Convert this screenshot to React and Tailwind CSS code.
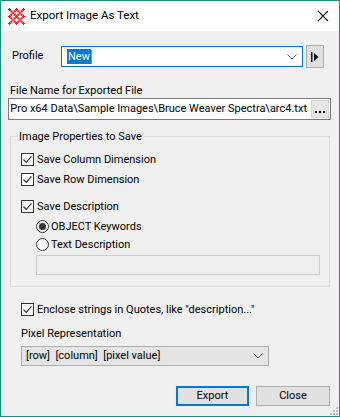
import React from "react";

function Check({ label }) {
  return (
    <div className="flex items-center h-[20px]">
      <div className="w-[13px] h-[13px] border border-[#333333] bg-white flex items-center justify-center">
        <svg width="11" height="11" viewBox="0 0 11 11">
          <path d="M1.5 5.5 L4.2 8.3 L9.5 2.3" fill="none" stroke="#333" strokeWidth="1.2" />
        </svg>
      </div>
      <span className="ml-[3px] text-[11px] text-black leading-none">{label}</span>
    </div>
  );
}

function Radio({ label, on }) {
  return (
    <div className="flex items-center h-[18px]">
      <div className="w-[13px] h-[13px] rounded-full border border-[#333333] bg-white flex items-center justify-center">
        {on && <div className="w-[7px] h-[7px] rounded-full bg-[#333333]" />}
      </div>
      <span className="ml-[2px] text-[11px] text-black leading-none">{label}</span>
    </div>
  );
}

function Chevron() {
  return (
    <svg width="10" height="6" viewBox="0 0 10 6">
      <path d="M0.5 0.5 L5 5 L9.5 0.5" fill="none" stroke="#555" strokeWidth="1" />
    </svg>
  );
}

function AppIcon() {
  const pts = [];
  for (let r = 0; r < 5; r++) {
    for (let c = 0; c < 5; c++) {
      if ((r + c) % 2 === 0) pts.push([c * 3.5 + 1.5, r * 3.5 + 1.5]);
    }
  }
  const pts2 = [];
  for (let r = 0; r < 4; r++) {
    for (let c = 0; c < 4; c++) {
      pts2.push([c * 3.5 + 3.25, r * 3.5 + 3.25]);
    }
  }
  return (
    <svg width="17" height="17" viewBox="0 0 17 17">
      {pts.map(([x, y], i) => (
        <g key={i} fill="#ff1010">
          <rect x={x - 1.5} y={y - 0.5} width="3" height="1" />
          <rect x={x - 0.5} y={y - 1.5} width="1" height="3" />
        </g>
      ))}
      {pts2.map(([x, y], i) => (
        <rect key={"b" + i} x={x - 1} y={y - 1} width="2" height="2" fill="#ff1010" />
      ))}
    </svg>
  );
}

export default function App() {
  return (
    <div className="w-[340px] h-[417px] border border-[#1f8a80] bg-[#f0f0f0] flex flex-col relative overflow-hidden font-['Roboto',sans-serif]">
      {/* title bar */}
      <div className="h-[30px] bg-white flex items-center shrink-0">
        <div className="ml-[7px] mt-[1px] flex"><AppIcon /></div>
        <span className="ml-[5px] text-[11.5px] text-black">Export Image As Text</span>
        <div className="ml-auto mr-[10px] flex">
          <svg width="12" height="12" viewBox="0 0 12 12">
            <path d="M1 1 L11 11 M11 1 L1 11" stroke="#111" strokeWidth="1.1" />
          </svg>
        </div>
      </div>

      {/* Profile row */}
      <div className="flex items-center mt-[14px] h-[23px]">
        <span className="ml-[11px] w-[49px] text-[11px] text-black">Profile</span>
        <div className="w-[242px] h-[21px] border border-[#0078d7] bg-white flex items-center">
          <span className="ml-[5px] bg-[#0078d7] text-white text-[11px] leading-[15px] px-[1px]">New</span>
          <span className="w-[1px] h-[14px] bg-[#f07000]" />
          <div className="ml-auto mr-[5px] flex items-center"><Chevron /></div>
        </div>
        <div className="ml-[3px] w-[18px] h-[23px] border border-[#adadad] bg-[#e1e1e1] flex items-center justify-center">
          <svg width="8" height="10" viewBox="0 0 8 10">
            <rect x="0" y="0" width="1.5" height="10" fill="#111" />
            <path d="M3 1 L7.5 5 L3 9 Z" fill="#111" />
          </svg>
        </div>
      </div>

      {/* File name */}
      <div className="ml-[9px] mt-[15px] text-[11px] text-black leading-[15px]">File Name for Exported File</div>
      <div className="ml-[7px] w-[323px] h-[22px] border border-[#7a7a7a] bg-white flex items-center">
        <div className="flex-1 overflow-hidden flex justify-end whitespace-nowrap">
          <span className="text-[11px] text-black pr-[4px]">C:\Users\Public\Documents\Mira Pro x64 Data\Sample Images\Bruce Weaver Spectra\arc4.txt</span>
        </div>
        <div className="mr-[1px] w-[18px] h-[18px] border border-[#d6d6d6] bg-[#e8e8e8] flex items-end justify-center gap-[2px] pb-[4px]">
          <div className="w-[2px] h-[2px] bg-black" />
          <div className="w-[2px] h-[2px] bg-black" />
          <div className="w-[2px] h-[2px] bg-black" />
        </div>
      </div>

      {/* Group box */}
      <div className="ml-[9px] mt-[16px] w-[320px] h-[151px] border border-[#dcdcdc] relative">
        <span className="absolute left-[6px] top-[-8px] px-[2px] bg-[#f0f0f0] text-[11px] text-black leading-[15px]">Image Properties to Save</span>
        <div className="ml-[10px] mt-[12px]">
          <Check label="Save Column Dimension" />
          <Check label="Save Row Dimension" />
          <div className="mt-[7px]"><Check label="Save Description" /></div>
          <div className="ml-[15px] mt-[1px]">
            <Radio label="OBJECT Keywords" on />
            <Radio label="Text Description" />
            <div className="mt-[2px] w-[284px] h-[20px] border border-[#cccccc] bg-[#f0f0f0]" />
          </div>
        </div>
      </div>

      <div className="ml-[20px] mt-[12px]"><Check label={'Enclose strings in Quotes, like "description..."'} /></div>

      <div className="ml-[20px] mt-[7px] text-[11px] text-black leading-[15px]">Pixel Representation</div>
      <div className="ml-[20px] mt-[5px] w-[248px] h-[20px] border border-[#adadad] bg-[#e5e5e5] flex items-center">
        <span className="ml-[4px] text-[11px] text-black whitespace-pre">[row]  [column]  [pixel value]</span>
        <div className="ml-auto mr-[5px] flex items-center"><Chevron /></div>
      </div>

      <div className="flex mt-[20px] ml-[175px]">
        <div className="w-[73px] h-[20px] border-2 border-[#0078d7] bg-[#e1e1e1] flex items-center justify-center text-[11px] text-black">Export</div>
        <div className="ml-[7px] w-[74px] h-[20px] border border-[#adadad] bg-[#e1e1e1] flex items-center justify-center text-[11px] text-black">Close</div>
      </div>

      {/* resize grip */}
      <svg className="absolute right-[1px] bottom-[1px]" width="10" height="10" viewBox="0 0 10 10">
        {[[8, 2], [8, 5], [5, 5], [8, 8], [5, 8], [2, 8]].map(([x, y], i) => (
          <rect key={i} x={x} y={y} width="2" height="2" fill="#bcbcbc" />
        ))}
      </svg>
    </div>
  );
}
